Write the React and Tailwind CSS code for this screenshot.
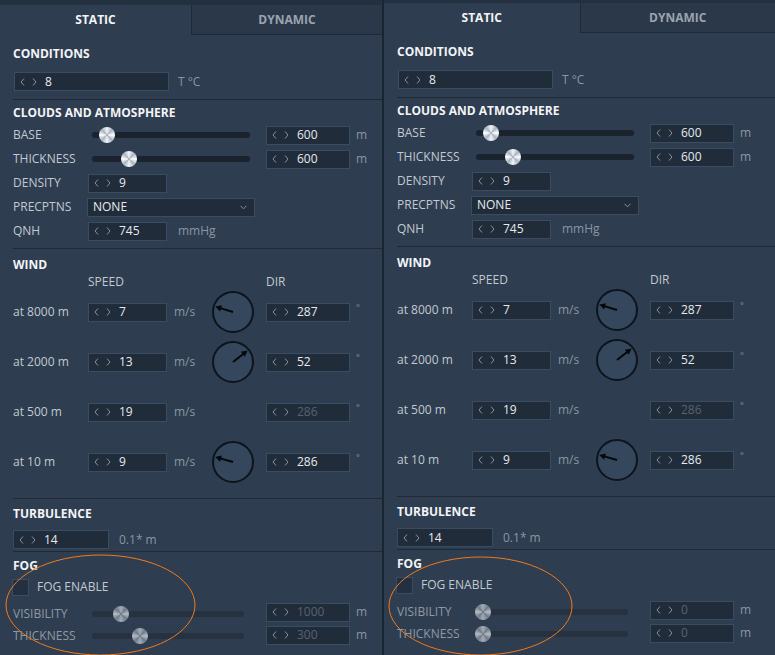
import React from 'react'

const PANELS = [
  { top: 'h-[5px]', width: 'w-[382px]', fog: { vis: 1000, thick: 300, visPos: 29, thickPos: 48 } },
  { top: 'h-[3px]', width: 'flex-1', fog: { vis: 0, thick: 0, visPos: 7, thickPos: 7 } },
]

function Chevron({ dir }) {
  return (
    <svg width="5" height="8" viewBox="0 0 5 8" className="shrink-0">
      <path
        d={dir === 'left' ? 'M4 0.5 L1 4 L4 7.5' : 'M1 0.5 L4 4 L1 7.5'}
        fill="none"
        stroke="#8593a2"
        strokeWidth="1"
      />
    </svg>
  )
}

function NumInput({ value, width, disabled }) {
  return (
    <div className={`flex h-[19px] shrink-0 items-center border border-[#3a4c61] bg-[#212c3a] pl-[5px] ${width}`}>
      <Chevron dir="left" />
      <span className="ml-[7px]"><Chevron dir="right" /></span>
      <span className={`ml-[8px] text-[12px] leading-none ${disabled ? 'text-[#56626f]' : 'text-[#e6eaee]'}`}>
        {value}
      </span>
    </div>
  )
}

function Heading({ children }) {
  return <p className="h-[16px] text-[12px] font-bold leading-[16px] text-[#f2f4f6]">{children}</p>
}

function Label({ children, width, dim }) {
  return (
    <span className={`shrink-0 text-[12px] leading-none ${dim ? 'text-[#8e99a5]' : 'text-[#c2c9d1]'} ${width}`}>
      {children}
    </span>
  )
}

function Unit({ children, className = '' }) {
  return <span className={`text-[12px] leading-none text-[#8a96a3] ${className}`}>{children}</span>
}

function Slider({ width, pos, dim }) {
  return (
    <div className={`relative h-[16px] shrink-0 ${width}`}>
      <div className={`absolute left-0 right-0 top-[5px] h-[6px] rounded-full ${dim ? 'bg-[#26323f]' : 'bg-[#1a232e]'}`} />
      <div
        className={`absolute top-0 h-[16px] w-[16px] rounded-full ${
          dim
            ? 'bg-[conic-gradient(#a3adb8,#6f7b88,#b4bdc6,#6f7b88,#a3adb8,#6f7b88,#b4bdc6,#6f7b88,#a3adb8)]'
            : 'bg-[conic-gradient(#f3f6f9,#a9b4c1,#ffffff,#a9b4c1,#f3f6f9,#a9b4c1,#ffffff,#a9b4c1,#f3f6f9)]'
        }`}
        style={{ left: pos - 8 }}
      />
    </div>
  )
}

function Dial({ dir }) {
  return (
    <svg width="42" height="42" viewBox="0 0 42 42" className="shrink-0">
      <circle cx="21" cy="21" r="20" fill="#34475d" stroke="#0e141b" strokeWidth="2" />
      <g transform={`rotate(${dir} 21 21)`}>
        <line x1="21" y1="21" x2="21" y2="6" stroke="#05080b" strokeWidth="2" />
        <polygon points="21,2.5 17.8,8.5 24.2,8.5" fill="#05080b" />
      </g>
    </svg>
  )
}

function WindRow({ label, speed, dir, dial }) {
  return (
    <div className="flex h-[50px] items-center">
      <Label width="w-[75px]">{label}</Label>
      <NumInput value={speed} width="w-[79px]" />
      <Unit className="w-[45px] shrink-0 pl-[7px]">m/s</Unit>
      <div className="flex w-[42px] shrink-0 justify-center">{dial ? <Dial dir={dir} /> : null}</div>
      <div className="w-[12px] shrink-0" />
      <NumInput value={dir} width="w-[84px]" disabled={!dial} />
      <span className="ml-[6px] self-start pt-[16px] text-[9px] leading-none text-[#8a96a3]">°</span>
    </div>
  )
}

function Panel({ top, width, fog }) {
  return (
    <div className={`flex flex-col bg-[#2e3d4f] font-['Open_Sans','Noto_Sans',sans-serif] ${width}`}>
      <div className={`bg-[#233040] ${top}`} />

      {/* tabs */}
      <div className="flex h-[30px]">
        <div className="flex w-1/2 items-center justify-center text-[12px] font-bold text-[#f2f4f6]">STATIC</div>
        <div className="flex w-1/2 items-center justify-center border-b border-l border-[#1f2a37] bg-[#2a384a] text-[12px] font-bold text-[#9ba4ae]">
          DYNAMIC
        </div>
      </div>

      {/* conditions */}
      <section className="ml-[13px] border-b border-[#1f2a37] pb-[8px] pt-[11px]">
        <Heading>CONDITIONS</Heading>
        <div className="mt-[10px] flex items-center pl-[1px]">
          <NumInput value="8" width="w-[155px]" />
          <Unit className="ml-[9px]">T °C</Unit>
        </div>
      </section>

      {/* clouds */}
      <section className="ml-[13px] border-b border-[#1f2a37] pb-[5px] pt-[5px]">
        <Heading>CLOUDS AND ATMOSPHERE</Heading>
        <div className="mt-[2px]">
          <div className="flex h-[24px] items-center">
            <Label width="w-[79px]">BASE</Label>
            <Slider width="w-[158px]" pos={15} />
            <span className="ml-[16px]"><NumInput value="600" width="w-[84px]" /></span>
            <Unit className="ml-[6px]">m</Unit>
          </div>
          <div className="flex h-[24px] items-center">
            <Label width="w-[79px]">THICKNESS</Label>
            <Slider width="w-[158px]" pos={37} />
            <span className="ml-[16px]"><NumInput value="600" width="w-[84px]" /></span>
            <Unit className="ml-[6px]">m</Unit>
          </div>
          <div className="flex h-[24px] items-center">
            <Label width="w-[75px]">DENSITY</Label>
            <NumInput value="9" width="w-[79px]" />
          </div>
          <div className="flex h-[24px] items-center">
            <Label width="w-[74px]">PRECPTNS</Label>
            <div className="flex h-[19px] w-[168px] items-center justify-between border border-[#3a4c61] bg-[#212c3a] pl-[5px] pr-[7px]">
              <span className="text-[12px] leading-none text-[#e6eaee]">NONE</span>
              <svg width="7" height="5" viewBox="0 0 7 5">
                <path d="M0.5 0.8 L3.5 3.8 L6.5 0.8" fill="none" stroke="#8593a2" strokeWidth="1" />
              </svg>
            </div>
          </div>
          <div className="flex h-[24px] items-center">
            <Label width="w-[75px]">QNH</Label>
            <NumInput value="745" width="w-[79px]" />
            <Unit className="ml-[11px]">mmHg</Unit>
          </div>
        </div>
      </section>

      {/* wind */}
      <section className="ml-[13px] border-b border-[#1f2a37] pb-[11px] pt-[8px]">
        <Heading>WIND</Heading>
        <div className="mt-[3px] flex h-[11px] items-center text-[12px] leading-none text-[#c2c9d1]">
          <span className="w-[253px] shrink-0 pl-[75px]">SPEED</span>
          <span>DIR</span>
        </div>
        <WindRow label="at 8000 m" speed="7" dir={287} dial />
        <WindRow label="at 2000 m" speed="13" dir={52} dial />
        <WindRow label="at 500 m" speed="19" dir={286} />
        <WindRow label="at 10 m" speed="9" dir={286} dial />
      </section>

      {/* turbulence */}
      <section className="ml-[13px] border-b border-[#1f2a37] pb-[2px] pt-[7px]">
        <Heading>TURBULENCE</Heading>
        <div className="mt-[8px] flex items-center">
          <NumInput value="14" width="w-[96px]" />
          <Unit className="ml-[10px]">0.1* m</Unit>
        </div>
      </section>

      {/* fog */}
      <section className="ml-[13px] pt-[6px]">
        <Heading>FOG</Heading>
        <div className="mt-[4px] flex h-[18px] items-center">
          <div className="-ml-[1px] h-[17px] w-[17px] border border-[#3a4c61] bg-[#243041]" />
          <span className="ml-[8px] text-[12px] leading-none text-[#c2c9d1]">FOG ENABLE</span>
        </div>
        <div className="mt-[7px]">
          <div className="flex h-[22px] items-center">
            <Label width="w-[79px]" dim>VISIBILITY</Label>
            <Slider width="w-[152px]" pos={fog.visPos} dim />
            <span className="ml-[22px] -mt-[4px]"><NumInput value={fog.vis} width="w-[84px]" disabled /></span>
            <Unit className="ml-[6px] -mt-[4px]">m</Unit>
          </div>
          <div className="flex h-[22px] items-center">
            <Label width="w-[79px]" dim>THICKNESS</Label>
            <Slider width="w-[152px]" pos={fog.thickPos} dim />
            <span className="ml-[22px] -mt-[2px]"><NumInput value={fog.thick} width="w-[84px]" disabled /></span>
            <Unit className="ml-[6px] -mt-[2px]">m</Unit>
          </div>
        </div>
      </section>
    </div>
  )
}

export default function App() {
  return (
    <div className="relative flex h-[655px] w-[775px] overflow-hidden bg-[#2e3d4f]">
      <Panel {...PANELS[0]} />
      <div className="w-[2px] shrink-0 bg-[#1b2531]" />
      <Panel {...PANELS[1]} />

      {/* annotation marks drawn over the screenshot */}
      <svg className="pointer-events-none absolute left-0 top-0" width="775" height="655">
        <ellipse cx="100.5" cy="605" rx="94.5" ry="50" fill="none" stroke="#f07a1c" strokeWidth="1" />
        <ellipse cx="480.5" cy="606" rx="91.5" ry="49" fill="none" stroke="#f07a1c" strokeWidth="1" />
      </svg>
    </div>
  )
}
